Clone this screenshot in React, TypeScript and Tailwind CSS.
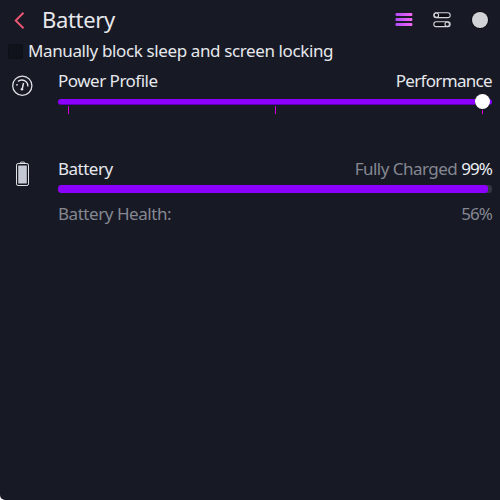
import React from "react";

function BackIcon() {
  return (
    <svg width="12" height="18" viewBox="0 0 12 18" fill="none" stroke="#ef5675" strokeWidth="1.9">
      <path d="M10.5 1.8 2.7 9.5l7.8 7.7" />
    </svg>
  );
}

function MenuIcon() {
  return (
    <svg width="18" height="16" viewBox="0 0 18 16">
      <defs>
        <linearGradient id="menu" x1="0" x2="1">
          <stop offset="0" stopColor="#b04cf8" />
          <stop offset="1" stopColor="#f266f3" />
        </linearGradient>
      </defs>
      <path fill="url(#menu)" d="M1 1h16l.5 1.5L17 4H1L.3 2.5zM1 6h16l.5 1.5L17 9H1L.3 7.5zM1 11h16l.5 1.5L17 14H1l-.7-1.5z" />
    </svg>
  );
}

function TogglesIcon() {
  return (
    <svg width="18" height="16" viewBox="0 0 18 16" fill="none" stroke="#d3d5da" strokeWidth="1.1">
      <rect x=".8" y=".8" width="16.4" height="4.8" rx="2.4" fill="#0d0e15" />
      <circle cx="3.4" cy="3.2" r="2.2" />
      <rect x=".8" y="9.8" width="16.4" height="4.8" rx="2.4" fill="#0d0e15" />
      <circle cx="14.2" cy="12.2" r="2.2" />
    </svg>
  );
}

function GaugeIcon() {
  return (
    <svg width="22" height="22" viewBox="0 0 22 22" fill="none" stroke="#dfe1e5">
      <circle cx="11.3" cy="10.7" r="9.6" strokeWidth="1.3" />
      <path d="M7 6.4a6 6 0 0 1 9.8 5.1" strokeWidth="1.4" />
      <path d="M12.5 8 11.3 13.6" strokeWidth="1.5" />
      <circle cx="11" cy="14.2" r="1.3" fill="#dfe1e5" stroke="none" />
      <circle cx="6" cy="9.8" r=".9" fill="#dfe1e5" stroke="none" />
    </svg>
  );
}

function BatteryIcon() {
  return (
    <svg width="14" height="26" viewBox="0 0 14 26" fill="none" stroke="#dfe1e5">
      <path d="M5.3 2.5V1.8q0-.7.8-.7h2.8q.8 0 .8.7v.7" />
      <rect x="1.5" y="2.5" width="12" height="22" rx="1.6" />
      <path d="M3.2 4.4h8.6v18.2H3.2z" fill="#c5c9d3" stroke="none" />
    </svg>
  );
}

export default function App() {
  return (
    <div className="h-[500px] w-[500px] bg-white">
      <main className="h-full overflow-hidden rounded-bl-[5px] bg-[#171925] font-['Noto_Sans',sans-serif] text-[17px] leading-6 tracking-[-0.5px] text-[#e6e8ec]">
        <header className="flex h-[39px] items-center pr-[11px] pl-[13px]">
          <BackIcon />
          <h1 className="-mt-0.5 ml-[17px] text-[22px] leading-7 tracking-[-0.35px]">Battery</h1>
          <div className="ml-auto flex items-center">
            <MenuIcon />
            <span className="ml-5"><TogglesIcon /></span>
            <span className="ml-5 flex size-[18px] items-center justify-center rounded-full bg-[#0d0e15]">
              <span className="size-4 shrink-0 rounded-full bg-[#d1d2d5]" />
            </span>
          </div>
        </header>
        <label className="flex h-6 items-center pl-2">
          <span className="size-[15px] rounded-xs border border-[#0e1017] bg-[#11131c]" />
          <span className="ml-[5px] tracking-[-0.38px] whitespace-nowrap">Manually block sleep and screen locking</span>
        </label>
        <section className="flex h-[94px] pt-[6px] pr-2 pl-[11px]">
          <div className="w-[47px] shrink-0 pt-[6px]"><GaugeIcon /></div>
          <div className="flex-1">
            <div className="flex justify-between">
              <span>Power Profile</span><span className="tracking-[-0.68px]">Performance</span>
            </div>
            <div className="flex h-[17px] items-center">
              <div className="h-1.5 w-[417px] rounded-l-full border-b border-[#5b00b4] bg-[#8b00ff]" />
              <div className="z-10 -mr-px size-[15px] shrink-0 rounded-full bg-white" />
              <div className="h-1.5 flex-1 rounded-r-full border-b border-[#5b00b4] bg-[#8b00ff]" />
            </div>
            <div className="-mt-1 flex h-2 justify-between pr-[9px] pl-[10px]">
              <span className="w-px bg-[#d500d5]" /><span className="w-px bg-[#d500d5]" /><span className="mt-1 w-px bg-[#d500d5]" />
            </div>
          </div>
        </section>
        <section className="flex pr-2 pl-[15px]">
          <div className="w-[43px] shrink-0 pt-[4px]"><BatteryIcon /></div>
          <div className="flex-1">
            <div className="flex justify-between">
              <span>Battery</span>
              <span className="tracking-[-0.52px] text-[#858891]">Fully Charged <span className="tracking-[-0.9px] text-[#eceef2]">99%</span></span>
            </div>
            <div className="mt-[4px] h-2 overflow-hidden rounded-[3px] bg-[#343640]">
              <div className="h-full w-[430px] rounded-[3px] bg-[#8b00ff]" />
            </div>
            <div className="mt-[9px] flex justify-between text-[#858891]">
              <span className="tracking-[-0.45px]">Battery Health:</span><span className="tracking-[-0.9px]">56%</span>
            </div>
          </div>
        </section>
      </main>
    </div>
  );
}
